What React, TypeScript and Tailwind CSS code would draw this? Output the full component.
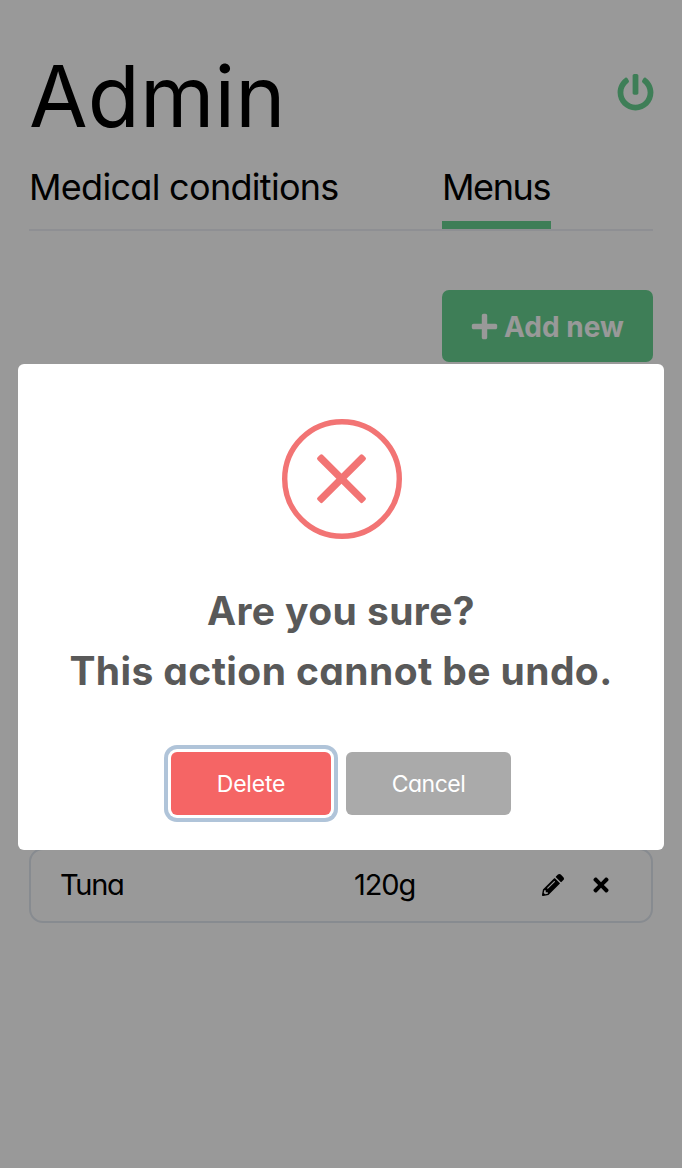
import { FaPencilAlt, FaPlus, FaPowerOff, FaTimes } from "react-icons/fa";

function Header() {
  return (
    <header className="flex h-[138px] items-start justify-between pt-[45px]">
      <h1 className="text-[85px] leading-[103px] font-normal tracking-[0.1px]">Admin</h1>
      <button aria-label="Log out" className="-mr-[1px] mt-[29px] text-[#68d391]">
        <FaPowerOff className="size-[37px]" />
      </button>
    </header>
  );
}

function Tabs() {
  return (
    <nav className="flex h-[93px] justify-between border-b-2 border-[#edeff6] pr-[102px] text-[36px] leading-[44px] font-normal">
      <a className="pt-[27px] tracking-[-0.7px]">Medical conditions</a>
      <a className="h-[91px] w-[109px] border-b-[8px] border-[#68d391] pt-[27px] tracking-[-1.4px] whitespace-nowrap">Menus</a>
    </nav>
  );
}

function FoodRow({ name, amount }: { name: string; amount: string }) {
  return (
    <li className="flex h-[75px] items-center rounded-[14px] border-2 border-[#e2e8f0] pl-[29px] text-[29px] font-normal">
      <span className="w-[294px] pb-[2px] tracking-[-1.3px]">{name}</span>
      <span className="w-[188px] pb-[2px] tracking-[-1.1px]">{amount}</span>
      <FaPencilAlt className="mb-[2px] size-[22px]" />
      <FaTimes className="mb-[2px] ml-[25.5px] size-[22px]" />
    </li>
  );
}

function ConfirmDialog() {
  return (
    <div className="absolute inset-0 flex items-start justify-center bg-black/40 pt-[364px]">
      <div role="dialog" className="flex h-[486px] w-[646px] flex-col items-center rounded-[6px] bg-white">
        <svg viewBox="0 0 120 120" fill="none" className="mt-[55px] ml-[2px] size-[120px] shrink-0">
          <circle cx="60" cy="60" r="57.3" stroke="#f27474" strokeWidth="5.4" />
          <g fill="#f27474">
            <rect x="27.5" y="56.1" width="64" height="7.2" rx="1.8" transform="rotate(45 59.5 59.7)" />
            <rect x="27.5" y="56.1" width="64" height="7.2" rx="1.8" transform="rotate(-45 59.5 59.7)" />
          </g>
        </svg>
        <h2 className="mt-[42px] text-center text-[39px] leading-[60px] font-bold tracking-[0.4px] whitespace-nowrap text-[#595959]">
          Are you sure?
          <br />
          This action cannot be undo.
        </h2>
        <div className="mt-[51px] flex gap-[15px] text-[23px] text-white">
          <button className="h-[63px] w-[160px] rounded-[6px] bg-[#f56565] pt-px tracking-[-0.2px] shadow-[0_0_0_3px_#fff,0_0_0_7px_#b0c4d9]">
            Delete
          </button>
          <button className="h-[63px] w-[165px] rounded-[6px] bg-[#aaa] pt-px tracking-[-0.5px]">Cancel</button>
        </div>
      </div>
    </div>
  );
}

export default function App() {
  return (
    <div className="relative h-[1168px] w-[682px] overflow-hidden bg-white px-[29px] font-['Inter',sans-serif] text-black [font-feature-settings:'cv11']">
      <Header />
      <Tabs />
      <div className="mt-[59px] flex justify-end">
        <button className="flex h-[72px] w-[211px] items-center rounded-[7px] bg-[#68d391] pl-[28px] text-[28px] font-bold text-white">
          <FaPlus className="mr-[5px] size-[29px]" />
          <span className="pt-px">Add new</span>
        </button>
      </div>
      <ul className="mt-[486px]">
        <FoodRow name="Tuna" amount="120g" />
      </ul>
      <ConfirmDialog />
    </div>
  );
}
